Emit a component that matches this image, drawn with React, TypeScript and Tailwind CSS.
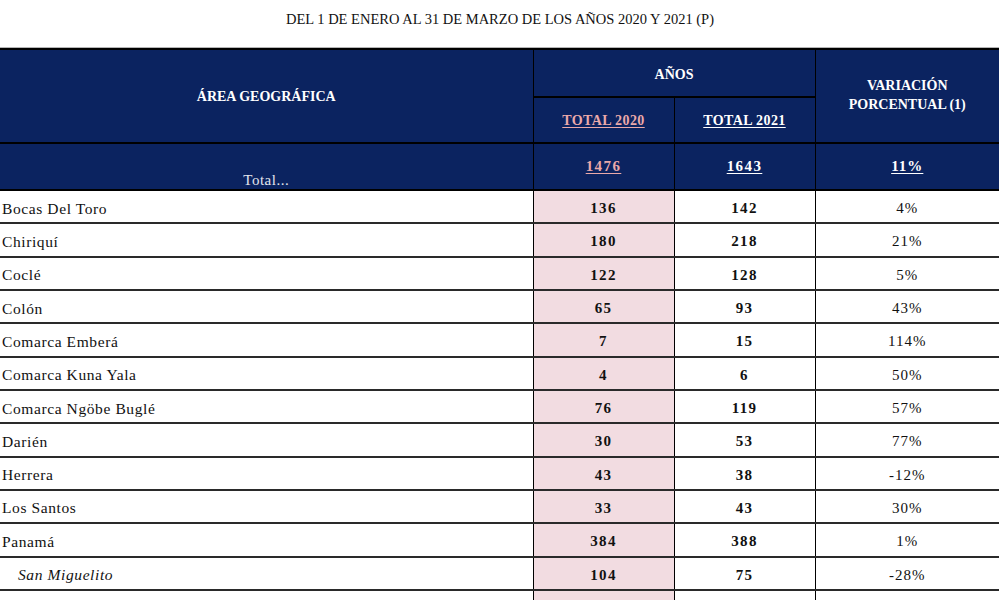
const rows: { name: string; a: string; b: string; v: string; sub?: boolean }[] = [
  { name: "Bocas Del Toro", a: "136", b: "142", v: "4%" },
  { name: "Chiriquí", a: "180", b: "218", v: "21%" },
  { name: "Coclé", a: "122", b: "128", v: "5%" },
  { name: "Colón", a: "65", b: "93", v: "43%" },
  { name: "Comarca Emberá", a: "7", b: "15", v: "114%" },
  { name: "Comarca Kuna Yala", a: "4", b: "6", v: "50%" },
  { name: "Comarca Ngöbe Buglé", a: "76", b: "119", v: "57%" },
  { name: "Darién", a: "30", b: "53", v: "77%" },
  { name: "Herrera", a: "43", b: "38", v: "-12%" },
  { name: "Los Santos", a: "33", b: "43", v: "30%" },
  { name: "Panamá", a: "384", b: "388", v: "1%" },
  { name: "San Miguelito", a: "104", b: "75", v: "-28%", sub: true },
  { name: "", a: "", b: "", v: "" },
];

export default function App() {
  return (
    <div className="w-[1000px] h-[600px] overflow-hidden bg-white text-[#111] font-['Liberation_Serif',serif]">
      <h1 className="h-[47px] pt-[9px] text-center text-[14.5px] leading-[20px]">
        DEL 1 DE ENERO AL 31 DE MARZO DE LOS AÑOS 2020 Y 2021 (P)
      </h1>
      <div className="w-[999px] border-t border-[#b5b5b5]">
        <table className="w-[999px] table-fixed border-collapse text-[15px]">
          <colgroup>
            <col className="w-[533px]" />
            <col className="w-[141px]" />
            <col className="w-[141px]" />
            <col className="w-[184px]" />
          </colgroup>
          <thead className="bg-[#0b2360] text-white font-bold text-[14px]">
            <tr className="h-[48px] border-t-2 border-black">
              <th rowSpan={2} className="border-r border-black align-middle">
                ÁREA GEOGRÁFICA
              </th>
              <th colSpan={2} className="border-b-2 border-r border-black align-middle pt-[2px]">
                AÑOS
              </th>
              <th rowSpan={2} className="align-middle leading-[19px] pb-[2px]">
                VARIACIÓN
                <br />
                PORCENTUAL (1)
              </th>
            </tr>
            <tr className="h-[46px]">
              <th className="border-r border-black text-[#eaa9a9] underline underline-offset-2 tracking-[0.4px]">TOTAL 2020</th>
              <th className="border-r border-black underline underline-offset-2 tracking-[0.4px]">TOTAL 2021</th>
            </tr>
            <tr className="h-[47px] border-t-2 border-b-2 border-black text-[15px]">
              <td className="border-r border-black text-center align-bottom font-normal text-[#e4e6ee] leading-[16px] pb-[1px] tracking-[0.5px]">
                Total...
              </td>
              <td className="border-r border-black text-center text-[#eaa9a9] underline underline-offset-2 tracking-[1.4px]">1476</td>
              <td className="border-r border-black text-center underline underline-offset-2 tracking-[1.4px]">1643</td>
              <td className="text-center underline underline-offset-2 tracking-[1px]">11%</td>
            </tr>
          </thead>
          <tbody>
            {rows.map((r, i) => (
              <tr key={i} className="h-[33.33px] border-b-2 border-[#2a2a2a]">
                <td
                  className={
                    "pt-[3px] text-[15.5px] tracking-[0.6px] " + (r.sub ? "pl-[18px] italic" : "pl-[2px]")
                  }
                >
                  {r.name}
                </td>
                <td className="pt-[3px] border-x border-black bg-[#f2dce1] text-center font-bold tracking-[1.3px]">{r.a}</td>
                <td className="pt-[3px] border-r border-black text-center font-bold tracking-[1.3px]">{r.b}</td>
                <td className="pt-[3px] text-center tracking-[1px]">{r.v}</td>
              </tr>
            ))}
          </tbody>
        </table>
      </div>
    </div>
  );
}
